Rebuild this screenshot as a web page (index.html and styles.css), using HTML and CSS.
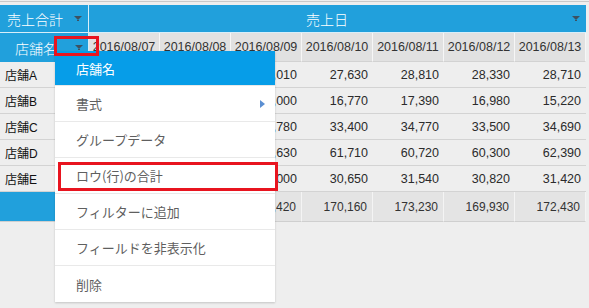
FILE: index.html
```html
<!DOCTYPE html>
<html lang="ja">
<head>
<meta charset="utf-8">
<link rel="stylesheet" href="styles.css">
</head>
<body>
<div class="screen">
  <div class="topline"></div>
  <div class="pivot">
    <div class="hcell h1 first"><span>売上合計</span><svg class="caret" width="8" height="5" viewBox="0 0 8 5"><polygon points="0,0 8,0 4,4" fill="#3d5161"/><rect x="3" y="4" width="2" height="1" fill="#3d5161"/></svg></div>
    <div class="hcell h1 span-dates"><span class="dates-title">売上日</span><svg class="caret" width="8" height="5" viewBox="0 0 8 5"><polygon points="0,0 8,0 4,4" fill="#3d5161"/><rect x="3" y="4" width="2" height="1" fill="#3d5161"/></svg></div>

    <div class="hcell h2 first store"><span>店舗名</span><svg class="caret" width="8" height="5" viewBox="0 0 8 5"><polygon points="0,0 8,0 4,4" fill="#3d5161"/><rect x="3" y="4" width="2" height="1" fill="#3d5161"/></svg></div>
    <div class="dcell">2016/08/07</div>
    <div class="dcell">2016/08/08</div>
    <div class="dcell">2016/08/09</div>
    <div class="dcell">2016/08/10</div>
    <div class="dcell">2016/08/11</div>
    <div class="dcell">2016/08/12</div>
    <div class="dcell">2016/08/13</div>

    <div class="rcell name">店舗A</div><div class="rcell num">26,120</div><div class="rcell num">27,450</div><div class="rcell num">28,010</div><div class="rcell num">27,630</div><div class="rcell num">28,810</div><div class="rcell num">28,330</div><div class="rcell num">28,710</div>
    <div class="rcell name">店舗B</div><div class="rcell num">15,800</div><div class="rcell num">16,200</div><div class="rcell num">17,000</div><div class="rcell num">16,770</div><div class="rcell num">17,390</div><div class="rcell num">16,980</div><div class="rcell num">15,220</div>
    <div class="rcell name">店舗C</div><div class="rcell num">32,900</div><div class="rcell num">33,150</div><div class="rcell num">34,780</div><div class="rcell num">33,400</div><div class="rcell num">34,770</div><div class="rcell num">33,500</div><div class="rcell num">34,690</div>
    <div class="rcell name">店舗D</div><div class="rcell num">60,210</div><div class="rcell num">61,040</div><div class="rcell num">61,630</div><div class="rcell num">61,710</div><div class="rcell num">60,720</div><div class="rcell num">60,300</div><div class="rcell num">62,390</div>
    <div class="rcell name">店舗E</div><div class="rcell num">30,100</div><div class="rcell num">30,400</div><div class="rcell num">31,000</div><div class="rcell num">30,650</div><div class="rcell num">31,540</div><div class="rcell num">30,820</div><div class="rcell num">31,420</div>

    <div class="tcell first"></div><div class="tcell num">165,130</div><div class="tcell num">168,240</div><div class="tcell num">172,420</div><div class="tcell num">170,160</div><div class="tcell num">173,230</div><div class="tcell num">169,930</div><div class="tcell num">172,430</div>
  </div>

  <div class="menu">
    <div class="item active">店舗名</div>
    <div class="item sub">書式<svg class="subarrow" width="5" height="8" viewBox="0 0 5 8"><polygon points="0,0 5,4 0,8" fill="#5b8fd2"/></svg></div>
    <div class="item">グループデータ</div>
    <div class="item">ロウ(行)の合計</div>
    <div class="item">フィルターに追加</div>
    <div class="item">フィールドを非表示化</div>
    <div class="item">削除</div>
  </div>

  <div class="mark mark-caret"></div>
  <div class="mark mark-item"></div>
</div>
</body>
</html>
```

FILE: styles.css
```css
html, body {
  margin: 0;
  padding: 0;
  background: #eeeeee;
}
body {
  font-family: "Liberation Sans", "Noto Sans CJK JP", sans-serif;
  color: #333;
}
.screen {
  position: relative;
  width: 589px;
  height: 308px;
  overflow: hidden;
}
.topline {
  height: 1px;
  margin-top: 1px;
  margin-bottom: 3px;
  background: #c9c9c9;
}
.pivot {
  display: grid;
  grid-template-columns: 89px repeat(7, 71px);
  width: 586px;
}
.hcell {
  background: #21a0dc;
  color: #fff;
  display: flex;
  align-items: center;
  font-family: "Liberation Sans", "Noto Sans CJK JP", sans-serif;
  font-weight: 300;
  font-size: 14px;
  box-sizing: border-box;
}
.h1 {
  height: 28px;
  border-bottom: 1px solid #d8eef9;
}
.h1.first {
  padding: 0 6px 0 7px;
  justify-content: space-between;
  border-right: 1px solid #d8eef9;
}
.span-dates {
  grid-column: 2 / 9;
  padding: 0 6px 0 217px;
  justify-content: space-between;
}
.h2 {
  height: 29px;
}
.store {
  padding: 0 5px 0 15px;
  justify-content: space-between;
  border-right: 1px solid #d8eef9;
}
.caret {
  display: block;
  flex: none;
}
.dcell {
  height: 29px;
  box-sizing: border-box;
  background: #e1e1e1;
  border-right: 1px solid #f6f6f6;
  border-bottom: 1px solid #d2d2d2;
  font-size: 12.5px;
  color: #333;
  display: flex;
  align-items: center;
  justify-content: center;
}
.rcell {
  height: 26px;
  box-sizing: border-box;
  border-bottom: 1px solid #d3d3d3;
  display: flex;
  align-items: center;
  font-size: 12.5px;
  color: #2b2b2b;
}
.name {
  padding-left: 5px;
  font-size: 12px;
  color: #111;
}
.num {
  justify-content: flex-end;
  padding-right: 5px;
}
.tcell {
  height: 30px;
  box-sizing: border-box;
  background: #e4e4e4;
  border-right: 1px solid #f4f4f4;
  border-bottom: 1px solid #cfcfcf;
  display: flex;
  align-items: center;
  font-size: 12px;
  color: #333;
}
.tcell.first {
  background: #21a0dc;
  border-right: 1px solid #d8eef9;
}
.menu {
  position: absolute;
  left: 55px;
  top: 51px;
  width: 220px;
  background: #fff;
  box-shadow: 0 1px 2px rgba(0,0,0,0.18);
}
.item {
  height: 36px;
  box-sizing: border-box;
  border-bottom: 1px solid #e9e9e9;
  padding-left: 21px;
  padding-right: 10px;
  display: flex;
  align-items: center;
  font-family: "Noto Sans CJK JP", sans-serif;
  font-size: 13px;
  color: #5f5f5f;
}
.item:last-child {
  border-bottom: none;
}
.item.active {
  background: #069de8;
  color: #fff;
  height: 35px;
}
.item.sub {
  justify-content: space-between;
}
.subarrow {
  display: block;
}
.mark {
  position: absolute;
  border: 3px solid #e8141f;
  box-sizing: border-box;
}
.mark-caret {
  left: 54px;
  top: 36px;
  width: 45px;
  height: 20px;
}
.mark-item {
  left: 58px;
  top: 162px;
  width: 220px;
  height: 29px;
}
```
